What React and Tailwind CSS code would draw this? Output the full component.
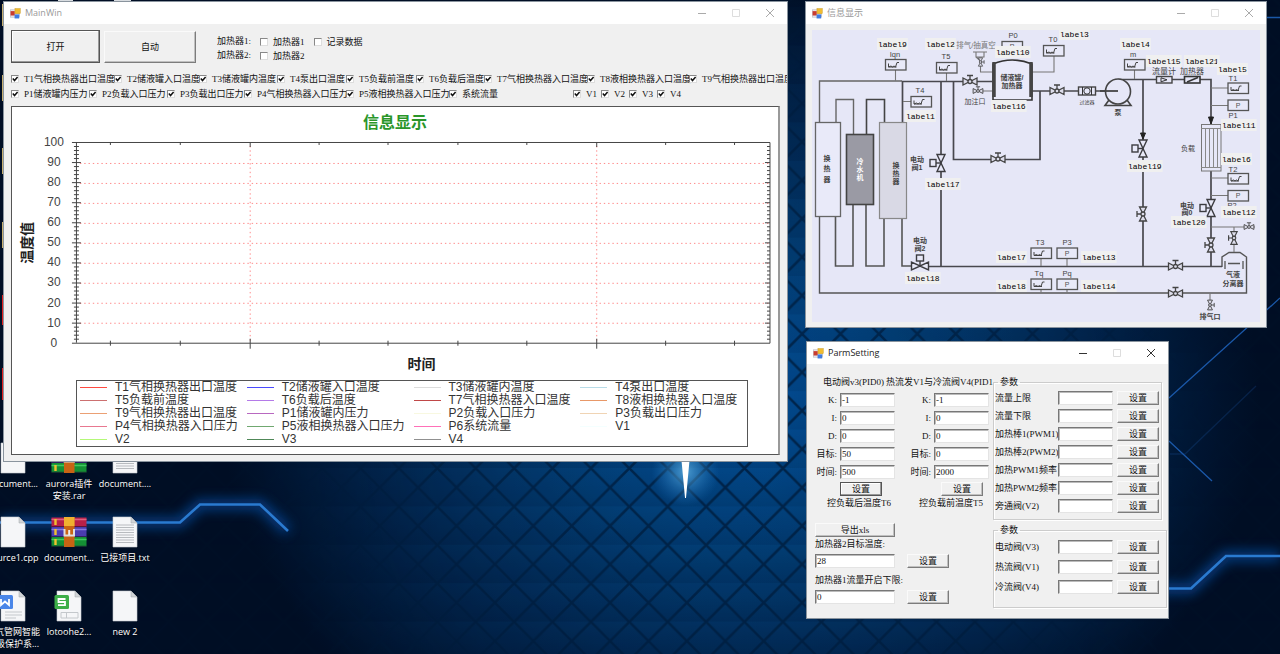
import React from 'react';

const seriesRow1 = [
  'T1气相换热器出口温度',
  'T2储液罐入口温度',
  'T3储液罐内温度',
  'T4泵出口温度',
  'T5负载前温度',
  'T6负载后温度',
  'T7气相换热器入口温度',
  'T8液相换热器入口温度',
  'T9气相换热器出口温度',
];

const seriesRow2 = [
  'P1储液罐内压力',
  'P2负载入口压力',
  'P3负载出口压力',
  'P4气相换热器入口压力',
  'P5液相换热器入口压力',
  '系统流量',
];

const legend = [
  { name: 'T1气相换热器出口温度', color: '#ff4a40' },
  { name: 'T2储液罐入口温度', color: '#4a4aff' },
  { name: 'T3储液罐内温度', color: '#dcdcdc' },
  { name: 'T4泵出口温度', color: '#b8dce8' },
  { name: 'T5负载前温度', color: '#cc7070' },
  { name: 'T6负载后温度', color: '#b47ae8' },
  { name: 'T7气相换热器入口温度', color: '#c04848' },
  { name: 'T8液相换热器入口温度', color: '#e89868' },
  { name: 'T9气相换热器出口温度', color: '#eba074' },
  { name: 'P1储液罐内压力', color: '#b868c0' },
  { name: 'P2负载入口压力', color: '#f8f8e0' },
  { name: 'P3负载出口压力', color: '#f0d4b4' },
  { name: 'P4气相换热器入口压力', color: '#e87890' },
  { name: 'P5液相换热器入口压力', color: '#70a870' },
  { name: 'P6系统流量', color: '#ff70b8' },
  { name: 'V1', color: '#f4ffff' },
  { name: 'V2', color: '#b4f878' },
  { name: 'V3', color: '#508858' },
  { name: 'V4', color: '#909090' },
];

const diagramLabels = [
  ['label9', 878, 44],
  ['label2', 926, 44],
  ['label10', 996, 52],
  ['label3', 1060, 34],
  ['label4', 1121, 44],
  ['label15', 1147, 61],
  ['label21', 1185, 61],
  ['label5', 1218, 69],
  ['label16', 992, 106],
  ['label1', 906, 116],
  ['label11', 1222, 125],
  ['label19', 1128, 166],
  ['label6', 1222, 159],
  ['label17', 926, 184],
  ['label20', 1172, 222],
  ['label12', 1222, 212],
  ['label7', 997, 257],
  ['label13', 1082, 257],
  ['label18', 906, 278],
  ['label8', 997, 286],
  ['label14', 1082, 286],
];

const pidRows = [
  ['K:', '-1', '-1'],
  ['I:', '0', '0'],
  ['D:', '0', '0'],
  ['目标:', '50', '0'],
  ['时间:', '500', '2000'],
];

const flowParams = ['流量上限', '流量下限', '加热棒1(PWM1)', '加热棒2(PWM2)', '加热PWM1频率', '加热PWM2频率', '旁通阀(V2)'];
const valveParams = ['电动阀(V3)', '热流阀(V1)', '冷流阀(V4)'];

/* ---------- shared controls ---------- */

const AppIcon = () => (
  <svg viewBox="0 0 12 12" className="size-[11px] shrink-0">
    <rect x="0.5" y="2" width="10" height="8" fill="#e8e8f0" stroke="#b0b0b8" strokeWidth="0.6" />
    <rect x="0.6" y="3.4" width="4.6" height="4.8" fill="#c83c30" />
    <rect x="5.4" y="0.6" width="5.8" height="5.6" fill="#f0bc30" stroke="#c89820" strokeWidth="0.5" />
    <rect x="5" y="7" width="5" height="4.4" fill="#3f7ce0" />
  </svg>
);

const TitleBar = ({ title, active }) => (
  <div className="flex h-[22px] items-center bg-white pl-[6px] pr-3">
    <AppIcon />
    <span className={`ml-1 font-['Open_Sans','Noto_Sans_CJK_SC',sans-serif] text-[9px] ${active ? 'text-[#222]' : 'text-[#999]'}`}>
      {title}
    </span>
    <div className={`ml-auto flex gap-6 ${active ? 'text-[#333]' : 'text-[#aaa]'}`}>
      <button aria-label="Minimize">
        <svg viewBox="0 0 10 10" className="size-[10px]" stroke="currentColor"><path d="M1 5.5h8" /></svg>
      </button>
      <button aria-label="Maximize" disabled>
        <svg viewBox="0 0 10 10" className="size-[10px] text-[#ddd]" stroke="currentColor" fill="none"><path d="M1.5 1.5h7v7h-7z" /></svg>
      </button>
      <button aria-label="Close">
        <svg viewBox="0 0 10 10" className="size-[10px]" stroke="currentColor"><path d="M1 1l8 8M9 1l-8 8" /></svg>
      </button>
    </div>
  </div>
);

const CheckBox = ({ label, checked }) => (
  <label className="flex h-[14px] items-center gap-[5px] whitespace-nowrap">
    <span className="relative size-2 shrink-0">
      <input
        type="checkbox"
        defaultChecked={checked}
        className="peer block size-2 appearance-none border border-r-[#ddd] border-b-[#ddd] border-t-[#888] border-l-[#888] bg-white"
      />
      <svg viewBox="0 0 8 8" className="pointer-events-none absolute inset-0 hidden size-2 peer-checked:block">
        <path d="M1.8 3.6L3.5 5.6L6.6 2" fill="none" stroke="#111" strokeWidth="1.5" />
      </svg>
    </span>
    {label}
  </label>
);

const Button = ({ children, className = '', dark }) => (
  <button
    className={`flex items-center justify-center border bg-[#f0f0f0] ${
      dark
        ? 'border-[#555] shadow-[inset_-1px_-1px_0_#999,inset_1px_1px_0_#fff]'
        : 'border-t-[#fafafa] border-l-[#fafafa] border-r-[#7c7c7c] border-b-[#7c7c7c] shadow-[inset_-1px_-1px_0_#c0c0c0]'
    } ${className}`}
  >
    {children}
  </button>
);

const TextBox = ({ className = '', ...props }) => (
  <input
    type="text"
    className={`h-[14px] border border-t-[#777] border-l-[#777] border-r-[#e4e4e4] border-b-[#e4e4e4] bg-white px-px shadow-[inset_1px_1px_0_#bbb] outline-none ${className}`}
    {...props}
  />
);

/* ---------- main window ---------- */

const axisY = (v) => 343.5 - v * 2.01;
const minorX = [110.5, 180.5, 319.5, 388.5, 458.5, 527.5, 666.5, 735.5];
const majorX = [250.5, 597.5];

const Chart = () => (
  <svg viewBox="12 134 767 216" className="block w-full font-['Liberation_Sans','Noto_Sans_CJK_SC',sans-serif]">
    <g stroke="#ff8a8a" strokeDasharray="1.4 2.9">
      {[10, 20, 30, 40, 50, 60, 70, 80, 90].map((v) => (
        <path key={v} d={`M80 ${Math.round(axisY(v)) + 0.5}H771`} />
      ))}
      {majorX.map((x) => (
        <path key={x} d={`M${x} 146V343`} />
      ))}
    </g>
    <g stroke="#444" fill="none">
      <path d="M72 142.5H771V343.5H72M76.5 142V343" />
      {Array.from({ length: 49 }, (_, i) => (i + 1) * 2).map((v) => {
        const major = v % 10 === 0;
        const y = axisY(v);
        return <path key={v} d={`M${major ? 72 : 74} ${y}H${major ? 81 : 79}M${major ? 766 : 768} ${y}H771`} />;
      })}
      {minorX.map((x) => (
        <path key={x} d={`M${x} 142V145M${x} 341V346`} />
      ))}
      {majorX.map((x) => (
        <path key={x} d={`M${x} 142V147M${x} 339V349`} />
      ))}
    </g>
    <g fill="#444" fontSize="12" textAnchor="middle">
      {[0, 10, 20, 30, 40, 50, 60, 70, 80, 90, 100].map((v) => (
        <text key={v} x="54" y={axisY(v) + 3.5}>{v}</text>
      ))}
    </g>
    <text x="27" y="243" transform="rotate(-90 27 243)" textAnchor="middle" dominantBaseline="central" fontSize="14" fontWeight="700" fill="#222">
      温度值
    </text>
  </svg>
);

const MainWin = () => (
  <section className="absolute top-px left-[3px] w-[785px] overflow-hidden border border-[#8a949e] bg-[#f0f0f0] text-[9px] leading-[14px] text-[#111]">
    <TitleBar title="MainWin" />
    <div className="flex pt-[6px] pl-[7px]">
      <Button dark className="h-[33px] w-[89px]">打开</Button>
      <Button className="mt-px ml-1 h-8 w-[92px]">自动</Button>
      <div className="ml-[21px] pt-1">
        <p>加热器1:</p>
        <p>加热器2:</p>
      </div>
      <div className="ml-[9px] pt-[5px]">
        <CheckBox label="加热器1" />
        <CheckBox label="加热器2" />
      </div>
      <div className="ml-[9px] pt-[5px]">
        <CheckBox label="记录数据" />
      </div>
    </div>

    <div className="mt-[9px] grid grid-cols-[103px_85px_78px_69px_70px_68px_103px_102px_99px] pl-[7px]">
      {seriesRow1.map((s) => (
        <CheckBox key={s} label={s} checked />
      ))}
    </div>
    <div className="mt-px flex pl-[7px]">
      <div className="grid grid-cols-[78px_78px_77px_102px_103px_124px]">
        {seriesRow2.map((s) => (
          <CheckBox key={s} label={s} checked />
        ))}
      </div>
      <div className="grid grid-cols-[28px_28px_28px_28px]">
        {['V1', 'V2', 'V3', 'V4'].map((s) => (
          <CheckBox key={s} label={s} checked />
        ))}
      </div>
    </div>

    <div className="mx-[7px] mt-[5px] mb-[6px] border border-[#555] border-r-2 border-r-[#999] bg-white pb-[7px]">
      <h2 className="h-[27px] pt-1 text-center text-[16px] leading-6 font-bold text-[#2a962a]">信息显示</h2>
      <Chart />
      <p className="pt-[5px] pl-[53px] text-center text-[14px] leading-5 font-bold text-[#222]">时间</p>
      <ul className="mt-[5px] mr-[30px] ml-16 grid h-[67px] grid-cols-4 overflow-hidden border border-[#555] pl-[3px] font-['Liberation_Sans','Noto_Sans_CJK_SC',sans-serif] text-[12px] leading-[13px] text-[#333]">
        {legend.map((item) => (
          <li key={item.name} className="flex items-center gap-2 whitespace-nowrap">
            <span className="h-px w-[27px]" style={{ backgroundColor: item.color }} />
            {item.name}
          </li>
        ))}
      </ul>
    </div>
  </section>
);

/* ---------- process diagram ---------- */

const Sensor = ({ x, y, pressure }) => (
  <g>
    <rect x={x} y={y} width="20.5" height="10.5" fill="#e8e9f8" stroke="#555" strokeWidth="1.3" />
    {pressure ? (
      <text x={x + 10} y={y + 7.8} fontSize="7" textAnchor="middle" fill="#555">P</text>
    ) : (
      <path d={`M${x + 3} ${y + 4}v3.5l2.5 -1l1.5 1l1.5 -1l1.5 1l1.5 -4.5h2M${x + 3} ${y + 7.5}h8`} fill="none" stroke="#444" />
    )}
  </g>
);

// hand valve, drawn horizontally and turned when it sits on a vertical pipe
const Valve = ({ x, y, r = 0, s = 1 }) => (
  <g transform={`translate(${x} ${y}) rotate(${r}) scale(${s})`} stroke="#444" strokeWidth="1.3" fill="#dcdcea">
    <path d="M-7 -3.5V3.5L0 0L7 3.5V-3.5L0 0Z" />
    <circle r="2" />
    <path d="M0 -2V-6M-3 -6H3" fill="none" />
  </g>
);

const MotorValve = ({ x, y, r = 0 }) => (
  <g transform={`translate(${x} ${y}) rotate(${r})`} stroke="#3c3c40" strokeWidth="1.4" fill="#e8e9f8">
    <path d="M-8.5 -4V4L0 0L8.5 4V-4L0 0Z" />
    <path d="M0 0V-5" />
    <rect x="-3.5" y="-11" width="7" height="6" />
  </g>
);

const Diagram = () => (
  <svg viewBox="812 30 448 292" className="block w-full bg-[#e6e7f7] font-['Liberation_Sans','Noto_Sans_CJK_SC',sans-serif]">
    <g fill="none" stroke="#666" strokeWidth="1.4">
      <path d="M819.5 122V81H902" />
      <path d="M836 122V99.5H853.5V134" />
      <path d="M866.5 134V99.5H884.5V122" stroke="#444" strokeWidth="1.6" />
      <path d="M835.5 216V266H853V204M866 204V266H884V218M902 218V266H912" stroke="#555" strokeWidth="1.6" />
      <path d="M819.5 216V293H1246.5V257L1240 252.5H1229L1222 257V267" stroke="#555" />
    </g>
    <g fill="none" stroke="#48484e" strokeWidth="1.7">
      <path d="M902.5 122V81.5H992M941 81V266M953.5 81V159.5H1040V91M1032 91H1078M1096 91H1118" />
      <path d="M928 266.5H1222M1118 79.5H1211V266M1143 79V266" />
    </g>
    <g fill="none" stroke="#777" strokeWidth="1.1">
      <path d="M895.5 70V81M946.5 73V81M903 101.5H911M980.5 65V72H992M1054 56V72H1032M1134.5 70V79" />
      <path d="M1211 88H1228M1211 105.5H1228M1211 178H1228M1211 195.5H1228M1211 227H1255M1234 227V252" />
      <path d="M1041 258V266M1067 258V266M1041 289V293M1067 289V293M1210 293V302M978 91H992" />
      <path d="M973 52H987M976 52V57H984V52M976 57L980.5 61" />
    </g>

    {/* heat exchangers and chiller */}
    <rect x="815.5" y="122.5" width="25" height="94" fill="#e9eaf9" stroke="#666" strokeWidth="1.3" />
    <rect x="846.5" y="134.5" width="27" height="70" fill="#9a9aa4" stroke="#444" strokeWidth="1.6" />
    <rect x="879.5" y="122.5" width="27" height="96" fill="#d9d9e5" stroke="#888" strokeWidth="1.2" />

    {/* tank */}
    <path d="M993 100V64Q1012 56 1032 64V100Z" fill="#e9eaf9" stroke="#333" strokeWidth="1.6" />
    <path d="M994 62V97M1031 62V97" stroke="#444" strokeWidth="3.5" />

    {/* filter and pump */}
    <rect x="1078.5" y="87" width="17" height="8" fill="#e6e7f7" stroke="#444" strokeWidth="1.4" />
    <circle cx="1087" cy="91" r="3.2" fill="none" stroke="#333" />
    <path d="M1082.5 87V95M1091.5 87V95" stroke="#333" />
    <path d="M1109 100L1105 105.5H1131L1127 100" fill="none" stroke="#444" strokeWidth="1.6" />
    <circle cx="1118" cy="91.5" r="12.5" fill="#e6e7f7" stroke="#444" strokeWidth="1.6" />
    <path d="M1100 91H1118" stroke="#444" strokeWidth="1.8" />

    {/* flow meter and heater */}
    <rect x="1156.5" y="76.5" width="15.5" height="6.5" fill="#e6e7f7" stroke="#444" strokeWidth="1.4" />
    <path d="M1161 77.8L1167 79.8L1161 81.8Z" fill="none" stroke="#333" />
    <rect x="1184.5" y="76.5" width="15.5" height="6.5" fill="#e6e7f7" stroke="#333" strokeWidth="1.6" />
    <path d="M1187 82L1198 77.5" stroke="#333" strokeWidth="1.6" />

    {/* load */}
    <rect x="1201.5" y="124.5" width="19.5" height="46.5" fill="#e6e7f7" stroke="#777" />
    <path d="M1201 128.5H1221M1201 167.5H1221M1205.5 128V167M1209.5 128V167M1213.5 128V167M1217.5 128V167" stroke="#888" />
    <path d="M1208.5 117H1213.5L1211 124ZM1140.5 133H1145.5L1143 139Z" fill="#222" stroke="#222" />

    {/* separator */}
    <path d="M1225 261V269M1243 261V269M1228 263.5H1240" stroke="#555" strokeWidth="1.3" />

    <Sensor x={885.5} y={59.5} />
    <Sensor x={936.5} y={62.5} />
    <Sensor x={911} y={96.5} />
    <Sensor x={1002} y={41.5} pressure />
    <Sensor x={1043.5} y={45.5} />
    <Sensor x={1124.5} y={59.5} />
    <Sensor x={1228} y={83} />
    <Sensor x={1228} y={100} pressure />
    <Sensor x={1228} y={173.5} />
    <Sensor x={1228} y={190.5} pressure />
    <Sensor x={1031} y={248} />
    <Sensor x={1057} y={248} pressure />
    <Sensor x={1031} y={279} />
    <Sensor x={1057} y={279} pressure />

    <Valve x={970} y={81.5} />
    <Valve x={978} y={91} s={0.7} />
    <Valve x={980.5} y={62} r={90} s={0.6} />
    <Valve x={998} y={159} />
    <Valve x={1057} y={91} />
    <Valve x={1143} y={214} r={-90} />
    <Valve x={1175.5} y={266.5} />
    <Valve x={1175.5} y={293.5} />
    <Valve x={1211} y={245} r={-90} />
    <Valve x={1234} y={238} r={-90} s={0.9} />
    <Valve x={1249} y={227} s={0.7} />
    <Valve x={1210} y={305} r={90} s={0.7} />
    <MotorValve x={941} y={163} r={-90} />
    <MotorValve x={920} y={266} />
    <MotorValve x={1143} y={148.5} r={-90} />
    <MotorValve x={1211} y={208} r={-90} />

    <g fontSize="7" fontWeight="700" fill="#444" textAnchor="middle">
      <text x="827" y="161">换</text>
      <text x="827" y="171">热</text>
      <text x="827" y="182">器</text>
      <g fill="#fff">
        <text x="860" y="164">冷</text>
        <text x="860" y="172">水</text>
        <text x="860" y="180">机</text>
      </g>
      <text x="896" y="168">换</text>
      <text x="896" y="176">热</text>
      <text x="896" y="184">器</text>
      <text x="1012" y="79.5">储液罐/</text>
      <text x="1012" y="88">加热器</text>
      <text x="917" y="162">电动</text>
      <text x="917" y="170">阀1</text>
      <text x="920" y="243">电动</text>
      <text x="920" y="251">阀2</text>
      <text x="1118" y="115">泵</text>
      <text x="1187" y="208">电动</text>
      <text x="1187" y="215">阀0</text>
      <text x="1233" y="277">气液</text>
      <text x="1233" y="285.5">分离器</text>
      <text x="1210" y="319">排气口</text>
      <g fontWeight="400">
        <text x="976" y="48" fontSize="7.5" fill="#777">排气/抽真空</text>
        <text x="975" y="104">加注口</text>
        <text x="1087" y="103.5" fontSize="5">过滤器</text>
        <text x="1188" y="151">负载</text>
        <text x="1164" y="73.5" fontSize="8">流量计</text>
        <text x="1192" y="73.5" fontSize="8">加热器</text>
        <g fontSize="7.5">
          <text x="895" y="56.5">Iqn</text>
          <text x="946" y="59">T5</text>
          <text x="920" y="93">T4</text>
          <text x="1013" y="37.5">P0</text>
          <text x="1053" y="42">T0</text>
          <text x="1133" y="57">m</text>
          <text x="1233" y="81">T1</text>
          <text x="1233" y="118">P1</text>
          <text x="1233" y="172">T2</text>
          <text x="1232" y="208">P2</text>
          <text x="1040" y="244.5">T3</text>
          <text x="1067" y="244.5">P3</text>
          <text x="1039" y="275.5">Tq</text>
          <text x="1067" y="275.5">Pq</text>
        </g>
      </g>
    </g>

    <g className="font-['Liberation_Mono',monospace]" fontSize="8" fill="#000">
      {diagramLabels.map(([name, x, y]) => (
        <g key={name}>
          <rect x={x - 1} y={y - 6} width={name.length * 4.8 + 2} height="12" fill="#f0f0f0" />
          <text x={x} y={y + 3}>{name}</text>
        </g>
      ))}
    </g>
  </svg>
);

const InfoWin = () => (
  <section className="absolute top-px left-[805px] w-[462px] border border-[#8a949e] bg-[#f0f0f0]">
    <TitleBar title="信息显示" />
    <div className="px-[6px] pt-[6px] pb-[5px]">
      <Diagram />
    </div>
  </section>
);

/* ---------- parameter window ---------- */

const PidForm = ({ id, values, note, primary }) => (
  <div className="w-[94px] shrink-0">
    <div className="flex flex-col gap-1">
      {pidRows.map(([label], i) => (
        <div key={label} className="flex items-center">
          <label htmlFor={`${id}-${i}`} className="w-[25px] pr-[3px] text-right whitespace-nowrap">{label}</label>
          <TextBox id={`${id}-${i}`} defaultValue={values[i]} className="w-[55px]" />
        </div>
      ))}
    </div>
    <Button dark={primary} className={`mt-[3px] h-[14px] w-[42px] ${primary ? 'ml-[25px]' : 'ml-8'}`}>设置</Button>
    <p className={`whitespace-nowrap ${primary ? 'pl-3' : 'pl-[10px]'}`}>{note}</p>
  </div>
);

const ParamGroup = ({ id, items, className = '', rowClass }) => (
  <fieldset className={`border border-[#ccc] shadow-[inset_1px_1px_0_#fff,1px_1px_0_#fff] ${className}`}>
    <legend className="ml-1 px-[2px] leading-[14px]">参数</legend>
    {items.map((label, i) => (
      <div key={label} className={`flex items-center ${rowClass}`}>
        <label htmlFor={`${id}-${i}`} className="w-16 pl-px whitespace-nowrap">{label}</label>
        <TextBox id={`${id}-${i}`} className="w-[55px]" />
        <Button className="ml-1 h-[14px] w-[42px]">设置</Button>
      </div>
    ))}
  </fieldset>
);

const ParmSetting = () => (
  <section className="absolute top-[341px] left-[806px] w-[363px] border border-[#8a949e] bg-[#f0f0f0] text-[9px] leading-[14px] text-[#111]">
    <TitleBar title="ParmSetting" active />
    <div className="flex pt-[11px] pb-[10px] pl-2">
      <div className="w-[178px] shrink-0">
        <div className="flex h-[18px] gap-[2px] pl-2 whitespace-nowrap">
          <h3>电动阀v3(PID0)</h3>
          <h3>热流发V1与冷流阀V4(PID1</h3>
        </div>
        <div className="flex">
          <PidForm id="pid0" values={pidRows.map((r) => r[1])} note="控负载后温度T6" primary />
          <PidForm id="pid1" values={pidRows.map((r) => r[2])} note="控负载前温度T5" />
        </div>
        <Button className="mt-[13px] h-[14px] w-20">导出xls</Button>
        <label htmlFor="heater2" className="block">加热器2目标温度:</label>
        <div className="mt-[3px] flex items-center gap-3">
          <TextBox id="heater2" defaultValue="28" className="w-20" />
          <Button className="h-[14px] w-[42px]">设置</Button>
        </div>
        <label htmlFor="heater1" className="mt-[5px] block">加热器1流量开启下限:</label>
        <div className="mt-[3px] flex items-center gap-3">
          <TextBox id="heater1" defaultValue="0" className="w-20" />
          <Button className="h-[14px] w-[42px]">设置</Button>
        </div>
      </div>
      <div className="flex flex-col gap-[3px]">
        <ParamGroup id="flow" items={flowParams} className="mr-1 h-[145px] w-[169px]" rowClass="h-[18px]" />
        <ParamGroup id="valve" items={valveParams} className="h-[85px] w-[174px]" rowClass="h-5" />
      </div>
    </div>
  </section>
);

/* ---------- desktop ---------- */

const Page = ({ children }) => (
  <svg viewBox="0 0 36 32" className="mx-auto h-8 w-9">
    <path d="M6 1H24L30 7V31H6Z" fill="#f5f6f8" stroke="#c8ccd0" strokeWidth="0.6" />
    <path d="M24 1V7H30Z" fill="#d0d3d6" stroke="#a0a4a8" strokeWidth="0.5" />
    {children}
  </svg>
);

const TextPage = () => (
  <Page>
    <path d="M9 9H27M9 11.5H27M9 14H27M9 16.5H27M9 19H27M9 21.5H27M9 24H27M9 26.5H27" stroke="#a8acb0" strokeWidth="0.8" />
  </Page>
);

const Archive = () => (
  <svg viewBox="0 0 36 32" className="mx-auto h-8 w-9">
    <rect x="0.5" y="1.5" width="35" height="9.5" fill="#b82048" />
    <rect x="0.5" y="11" width="35" height="10" fill="#4a3cb0" />
    <rect x="0.5" y="21" width="35" height="9.5" fill="#149034" />
    <path d="M0.5 3.5H35.5" stroke="#e06080" strokeWidth="1.5" />
    <path d="M0.5 13.5H35.5" stroke="#8878e0" strokeWidth="1.5" />
    <path d="M0.5 23.5H35.5" stroke="#40c860" strokeWidth="1.5" />
    <path d="M0.5 10.5H35.5M0.5 20.5H35.5M0.5 30.2H35.5" stroke="#201030" opacity="0.6" />
    <path d="M4.5 3V9M4.5 13V19M4.5 23V29" stroke="#f0c030" strokeWidth="2.4" />
    <rect x="13" y="1" width="10.5" height="30" fill="#c86414" />
    <rect x="13" y="1" width="10.5" height="9" fill="#f0b030" />
    <path d="M13.5 13V19.5H23V13" fill="none" stroke="#ddd" strokeWidth="2" />
    <path d="M18.2 14V19" stroke="#eee" strokeWidth="2" />
  </svg>
);

const WriterDoc = () => (
  <Page>
    <rect x="2" y="5" width="16" height="14" rx="1.5" fill="#4a86e8" />
    <path d="M6 9V15L10 11.5L14 15V9" fill="none" stroke="#fff" strokeWidth="1.8" />
    <path d="M10 22H27M10 25H27M10 28H21" stroke="#c4c8cc" />
  </Page>
);

const SheetDoc = () => (
  <Page>
    <rect x="3.5" y="5" width="14.5" height="14" rx="1.5" fill="#3cae48" />
    <path d="M14.5 9H7.5V12H14V15.2H7" fill="none" stroke="#fff" strokeWidth="1.8" />
    <path d="M10 22.5H27V28H10ZM15.5 22.5V28" fill="none" stroke="#c4c8cc" />
  </Page>
);

const desktopItems = [
  { icon: Page, name: 'document...' },
  { icon: Archive, name: 'aurora插件安装.rar' },
  { icon: TextPage, name: 'document....' },
  { icon: Page, name: 'source1.cpp' },
  { icon: Archive, name: 'document...' },
  { icon: TextPage, name: '已接项目.txt' },
  { icon: WriterDoc, name: '燃气管网智能升级保护系...' },
  { icon: SheetDoc, name: 'lotoohe2...' },
  { icon: Page, name: 'new 2' },
];

const Wallpaper = () => (
  <svg viewBox="0 0 1280 654" preserveAspectRatio="xMidYMid slice" className="absolute inset-0 size-full">
    <defs>
      <radialGradient id="base" gradientUnits="userSpaceOnUse" cx="740" cy="400" r="520" gradientTransform="translate(740 400) scale(1 .8) translate(-740 -400)">
        <stop offset="0" stopColor="#004c96" />
        <stop offset="0.35" stopColor="#003a70" />
        <stop offset="0.7" stopColor="#002046" />
        <stop offset="1" stopColor="#000e24" />
      </radialGradient>
      <radialGradient id="fade" gradientUnits="userSpaceOnUse" cx="740" cy="440" r="480">
        <stop offset="0" stopColor="#fff" />
        <stop offset="0.65" stopColor="#bbb" />
        <stop offset="1" stopColor="#111" />
      </radialGradient>
      <radialGradient id="flare">
        <stop offset="0" stopColor="#6cc0f0" stopOpacity="0.7" />
        <stop offset="1" stopColor="#2080d0" stopOpacity="0" />
      </radialGradient>
      <linearGradient id="cell" x1="0" y1="0" x2="0" y2="1">
        <stop offset="0" stopColor="#1470b8" stopOpacity="0.14" />
        <stop offset="1" stopColor="#001430" stopOpacity="0.14" />
      </linearGradient>
      <pattern id="mesh" width="38.4" height="38.4" x="629" y="468" patternUnits="userSpaceOnUse">
        <path d="M19.2 -19.2L38.4 0L19.2 19.2L0 0ZM19.2 19.2L38.4 38.4L19.2 57.6L0 38.4ZM0 0L19.2 19.2L0 38.4L-19.2 19.2ZM38.4 0L57.6 19.2L38.4 38.4L19.2 19.2Z" fill="url(#cell)" />
        <path d="M-2 -2L41 41M41 -2L-2 41" stroke="#001c3c" strokeWidth="2.6" opacity="0.85" />
      </pattern>
      <mask id="meshMask">
        <rect width="1280" height="654" fill="url(#fade)" />
      </mask>
      <filter id="glow" x="-20%" y="-100%" width="140%" height="300%">
        <feGaussianBlur stdDeviation="6" />
      </filter>
    </defs>
    <rect width="1280" height="654" fill="url(#base)" />
    <rect width="1280" height="654" fill="url(#mesh)" mask="url(#meshMask)" />
    <g fill="none" stroke="#0a60c8" strokeWidth="11" opacity="0.55" filter="url(#glow)">
      <path d="M0 522.5H180L200 504.5H260L288 531" />
      <path d="M1160 588.5H1191L1226 556H1280" />
    </g>
    <g fill="none" stroke="#2a7ad0" strokeWidth="2.6">
      <path d="M0 522.5H180L200 504.5H260L288 531" />
      <path d="M1160 588.5H1191L1226 556H1280" />
    </g>
    <g fill="none" stroke="#1a58a8" strokeWidth="1.3">
      <path d="M1169 398L1280 298M1169 441L1212 481M1266 17.5H1280" />
      <path d="M1170 454H1185L1256 386" opacity="0.25" />
    </g>
    <circle cx="685.5" cy="472" r="34" fill="url(#flare)" />
    <path d="M681 455H690L686 498H685Z" fill="#fff" />

    {/* edges of icons behind the main window */}
    <path d="M2.5 4V26M2.5 75V101M2.5 148V174M2.5 222V248" stroke="#c8b070" />
    <path d="M3 295V325M3 368V400" stroke="#e02020" strokeWidth="2" />
    <path d="M58 0.5H73M114 0.5H131" stroke="#d8dce0" />
  </svg>
);

const App = () => (
  <main className="relative min-h-screen overflow-hidden bg-[#000e24] font-['Liberation_Serif','Noto_Sans_CJK_SC',serif]">
    <Wallpaper />
    <ul className="absolute top-[442px] -left-[15px] grid grid-cols-[56px_56px_56px] auto-rows-[74px]">
      {desktopItems.map(({ icon: Icon, name }, i) => (
        <li key={i} className="text-center font-['Open_Sans','Noto_Sans_CJK_SC',sans-serif] text-[9px] leading-3 text-white [text-shadow:0_1px_2px_#000]">
          <Icon />
          <p className="mt-1 px-px">{name}</p>
        </li>
      ))}
    </ul>
    <MainWin />
    <InfoWin />
    <ParmSetting />
  </main>
);

export default App;
